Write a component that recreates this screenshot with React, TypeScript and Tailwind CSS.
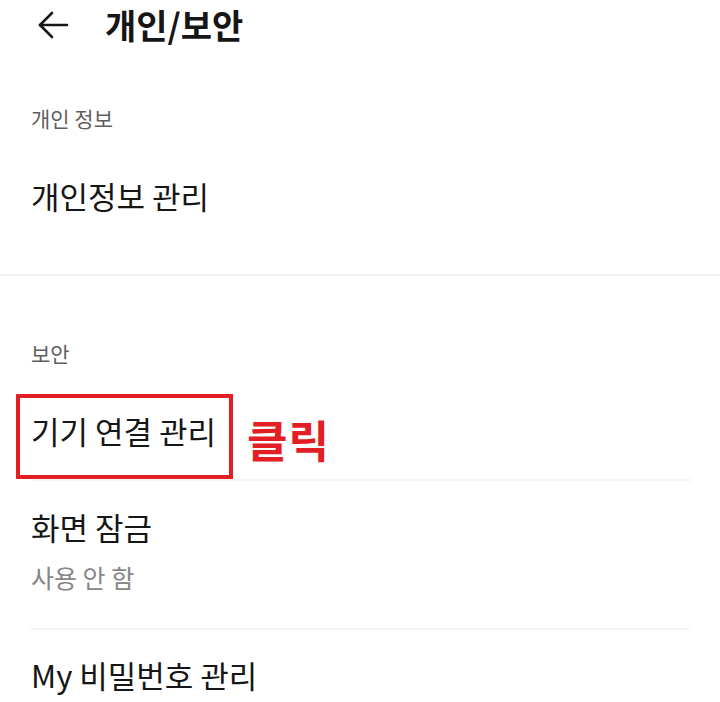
import React from "react";

const font = { fontFamily: '"Noto Sans CJK KR", "Noto Sans", sans-serif' };

export default function App() {
  return (
    <div className="w-[720px] h-[702px] bg-white overflow-hidden text-[#161616]" style={font}>
      {/* Header */}
      <div className="h-[50px] flex items-center">
        <div className="w-[105px] flex items-center pl-[37px]">
          <svg width="32" height="28" viewBox="0 0 32 28" fill="none" stroke="#161616" strokeWidth="2.6" strokeLinecap="round" strokeLinejoin="round">
            <path d="M3 14 H30" />
            <path d="M15 2 L3 14 L15 26" />
          </svg>
        </div>
        <div className="text-[34px] font-bold leading-none">개인/보안</div>
      </div>

      {/* 개인 정보 section */}
      <div className="px-[31px] pt-[58px] text-[21px] leading-none text-[#5f5f5f]">개인 정보</div>
      <div className="px-[31px] pt-[51px] text-[31px] leading-none">개인정보 관리</div>
      <div className="mt-[63px] h-[2px] bg-[#f0f0f0]" />

      {/* 보안 section */}
      <div className="px-[31px] pt-[67px] text-[21px] leading-none text-[#5f5f5f]">보안</div>
      <div className="flex items-start pl-[16px] pt-[30px]">
        <div className="w-[217px] h-[85px] border-[4px] border-[#e31e24] pl-[11px] pt-[17px]">
          <span className="block text-[31px] leading-none">기기 연결 관리</span>
        </div>
        <span className="ml-[14px] mt-[23px] text-[44px] font-bold leading-none text-[#e31e24] tracking-[1px]">클릭</span>
      </div>
      <div className="ml-[30px] w-[662px] h-[2px] bg-[#f6f6f6]" />

      <div className="px-[31px] pt-[30px] text-[31px] leading-none">화면 잠금</div>
      <div className="px-[31px] pt-[23px] text-[25px] leading-none text-[#868686]">사용 안 함</div>
      <div className="ml-[30px] w-[660px] mt-[38px] h-[2px] bg-[#f6f6f6]" />

      <div className="px-[31px] pt-[29px] text-[31px] leading-none">My 비밀번호 관리</div>
    </div>
  );
}
